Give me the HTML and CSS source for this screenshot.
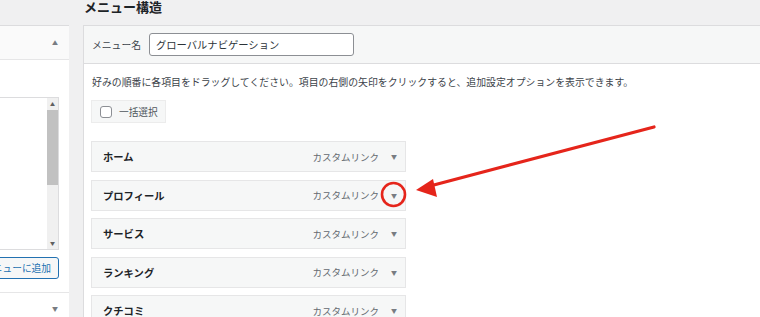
FILE: index.html
```html
<!DOCTYPE html>
<html lang="ja">
<head>
  <meta charset="UTF-8">
  <meta name="viewport" content="width=device-width, initial-scale=1.0">
  <title>メニュー構造</title>
  <link rel="stylesheet" href="styles.css">
</head>
<body>

<div class="page">

  <!-- 左側：メニュー項目を追加 -->
  <div class="side">
    <div class="side-panel">
      <div class="side-head"><span class="toggle">▲</span></div>
      <div class="side-body">
        <div class="listbox">
          <div class="list"></div>
          <div class="scrollbar">
            <span class="sb-arrow">▲</span>
            <div class="sb-track"><div class="sb-thumb"></div></div>
            <span class="sb-arrow">▼</span>
          </div>
        </div>
        <div class="add-row">
          <button class="add-btn">メニューに追加</button>
        </div>
      </div>
      <div class="side-head closed"><span class="toggle">▼</span></div>
    </div>
  </div>

  <!-- 右側：メニュー構造 -->
  <div class="main">
    <h2 class="title">メニュー構造</h2>
    <div class="menu-panel">
      <div class="menu-head">
        <label class="menu-label">メニュー名</label>
        <input class="menu-name" type="text" value="グローバルナビゲーション">
      </div>
      <div class="menu-body">
        <p class="hint">好みの順番に各項目をドラッグしてください。項目の右側の矢印をクリックすると、追加設定オプションを表示できます。</p>
        <div class="bulk"><span class="check"></span>一括選択</div>

        <ul class="items">
          <li class="item">
            <span class="item-title">ホーム</span>
            <span class="item-type">カスタムリンク</span>
            <span class="item-arrow">▼</span>
          </li>
          <li class="item">
            <span class="item-title">プロフィール</span>
            <span class="item-type">カスタムリンク</span>
            <span class="item-arrow">▼</span>
          </li>
          <li class="item">
            <span class="item-title">サービス</span>
            <span class="item-type">カスタムリンク</span>
            <span class="item-arrow">▼</span>
          </li>
          <li class="item">
            <span class="item-title">ランキング</span>
            <span class="item-type">カスタムリンク</span>
            <span class="item-arrow">▼</span>
          </li>
          <li class="item">
            <span class="item-title">クチコミ</span>
            <span class="item-type">カスタムリンク</span>
            <span class="item-arrow">▼</span>
          </li>
        </ul>
      </div>
    </div>
  </div>

</div>

<!-- 説明用の矢印と丸 -->
<svg class="annot" width="760" height="317" viewBox="0 0 760 317">
  <circle cx="393.5" cy="194.5" r="11.5" fill="none" stroke="#e5251b" stroke-width="2.6"/>
  <line x1="654" y1="127" x2="430" y2="186" stroke="#e5251b" stroke-width="3.2" stroke-linecap="round"/>
  <polygon points="416,190 433,179 437,197" fill="#e5251b"/>
</svg>

</body>
</html>
```

FILE: styles.css
```css
body {
    margin: 0;
    padding: 0;
    background: #f0f0f1;
    font-family: "Noto Sans CJK JP", "Noto Sans", sans-serif;
    color: #1d2327;
    overflow: hidden;
    width: 760px;
    height: 317px;
}

.page {
    display: flex;
    gap: 14px;
}

/* 左カラム */
.side {
    width: 69px;
    margin-top: 25px;
    overflow: hidden;
    flex-shrink: 0;
}

.side-panel {
    width: 260px;
    margin-left: -192px;
    background: #fff;
    border: 1px solid #dcdcde;
    height: 300px;
}

.side-head {
    height: 33px;
    background: #fafafa;
    border-bottom: 1px solid #e6e6e7;
    display: flex;
    align-items: center;
    justify-content: flex-end;
    padding-right: 11px;
}

.side-head.closed {
    background: #fff;
    border-bottom: none;
    border-top: 1px solid #e6e6e7;
    height: 30px;
}

.toggle {
    font-size: 6px;
    color: #787c82;
}

.side-body {
    padding: 37px 10px 13px 10px;
}

.listbox {
    height: 151px;
    border: 1px solid #dcdcde;
    display: flex;
}

.list {
    flex: 1;
}

.scrollbar {
    width: 11px;
    background: #f0f0f0;
    display: flex;
    flex-direction: column;
    align-items: center;
}

.sb-arrow {
    font-size: 5px;
    color: #606060;
    height: 12px;
    line-height: 12px;
}

.sb-track {
    flex: 1;
    width: 100%;
}

.sb-thumb {
    height: 75px;
    background: #c1c1c1;
}

.add-row {
    display: flex;
    justify-content: flex-end;
    margin-top: 7px;
}

.add-btn {
    height: 22px;
    padding: 0 7px;
    font-family: inherit;
    font-size: 9.7px;
    color: #2271b1;
    background: #f6f7f7;
    border: 1px solid #2271b1;
    border-radius: 3px;
}

/* 右カラム */
.main {
    flex: 1;
    min-width: 0;
}

.title {
    margin: 0 0 0 1px;
    height: 25px;
    line-height: 13px;
    font-size: 13px;
    font-weight: bold;
    color: #1d2327;
}

.menu-panel {
    background: #fff;
    border: 1px solid #dcdcde;
    border-right: none;
    height: 300px;
}

.menu-head {
    height: 37px;
    background: #f6f7f7;
    border-bottom: 1px solid #dcdcde;
    display: flex;
    align-items: center;
    padding-left: 8px;
    gap: 8px;
}

.menu-label {
    font-size: 9.8px;
    color: #3c434a;
}

.menu-name {
    width: 205px;
    height: 23px;
    box-sizing: border-box;
    border: 1px solid #8c8f94;
    border-radius: 3px;
    padding: 0 6px;
    font-family: inherit;
    font-size: 10.3px;
    color: #2c3338;
    background: #fff;
}

.menu-body {
    padding: 11px 7px 0 7px;
}

.hint {
    margin: 0 0 0 1px;
    font-size: 9.9px;
    line-height: 15px;
    color: #3c434a;
}

.bulk {
    margin-top: 10px;
    width: 75px;
    height: 23px;
    box-sizing: border-box;
    background: #f6f7f7;
    border: 1px solid #ececec;
    display: flex;
    align-items: center;
    gap: 7px;
    padding-left: 8px;
    font-size: 9.7px;
    color: #50575e;
}

.check {
    width: 12px;
    height: 12px;
    box-sizing: border-box;
    border: 1px solid #8c8f94;
    border-radius: 3px;
    background: #fff;
}

.items {
    list-style: none;
    margin: 18px 0 0 0;
    padding: 0;
}

.item {
    width: 315px;
    height: 31px;
    box-sizing: border-box;
    background: #f6f7f7;
    border: 1px solid #e6e6e7;
    display: flex;
    align-items: center;
    padding-left: 11px;
    margin-bottom: 7.5px;
}

.item-title {
    flex: 1;
    font-size: 10.3px;
    font-weight: bold;
    color: #1d2327;
}

.item-type {
    font-size: 9.5px;
    color: #646970;
}

.item-arrow {
    width: 20px;
    margin: 0 1px 0 5px;
    text-align: center;
    font-size: 6px;
    color: #787c82;
}

/* 注釈 */
.annot {
    position: absolute;
    left: 0;
    top: 0;
    pointer-events: none;
}
```
